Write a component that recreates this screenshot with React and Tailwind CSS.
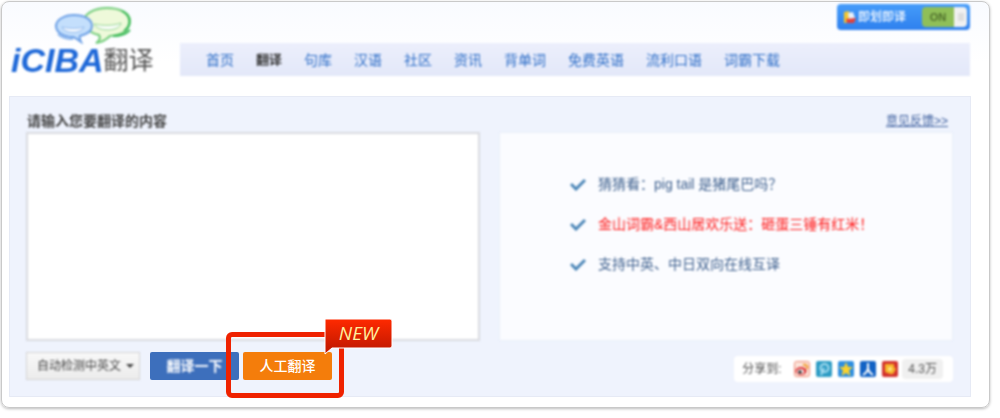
const navItems = [
  { label: '首页' },
  { label: '翻译', active: true },
  { label: '句库' },
  { label: '汉语' },
  { label: '社区' },
  { label: '资讯' },
  { label: '背单词' },
  { label: '免费英语' },
  { label: '流利口语' },
  { label: '词霸下载' },
]

const tips = [
  { text: '猜猜看：pig tail 是猪尾巴吗？' },
  { text: '金山词霸&西山居欢乐送：砸蛋三锤有红米！', hot: true },
  { text: '支持中英、中日双向在线互译' },
]

function Logo() {
  return (
    <a href="#" aria-label="iCIBA 翻译" className="block w-[171px] shrink-0 pl-0.5 pt-1 blur-[1px]">
      <svg viewBox="54 6 78 38" className="ml-[43px] h-[38px] w-[78px]" fill="none">
        <path d="M99 35 C101 38 99 41 96 43 C103 42 107 39 110 36 C122 35 130 30 130 21 C130 13 120 8 107 8 C94 8 84 14 84 21 C84 28 90 33 99 35Z" fill="#eef9da" stroke="#6fcb78" strokeWidth="2" />
        <path d="M122 11 C131 16 132 25 124 31 M113 36 C120 36 126 34 130 30" stroke="#38b955" strokeWidth="2" />
        <path d="M94 24 C102 26 114 26 121 23 C120 32 97 32 94 24Z" fill="#fff" stroke="#8fd48f" />
        <path d="M73 37 C76 38 78 40 81 42 C80 40 79 38 80 36 C88 34 92 30 92 26 C92 19 84 15 74 15 C64 15 56 20 56 26 C56 32 63 37 73 37Z" fill="#c4dffc" stroke="#6b9fe6" strokeWidth="2" />
        <path d="M58 34 C62 38 67 39 73 39" stroke="#8db7ee" strokeWidth="2" />
        <path d="M62 27 C69 29 78 29 84 27 C82 34 64 34 62 27Z" fill="#fff" stroke="#8db7ee" />
      </svg>
      <span className="flex h-8 items-center whitespace-nowrap">
        <span className="text-[34px] font-bold italic leading-8 text-[#1e68d8]">iCIBA</span>
        <span className="text-[25px] leading-8 text-[#555]">翻译</span>
      </span>
    </a>
  )
}

function InstantToggle() {
  return (
    <button
      type="button"
      role="switch"
      aria-checked="true"
      className="flex h-[26px] w-[133px] items-center rounded bg-gradient-to-b from-[#459cfa] to-[#2f80ee] pl-1.5 pr-[3px] blur-[1px]"
    >
      <svg viewBox="0 0 14 14" className="size-3.5">
        <path d="M1 2 L6 1 L8 12 L1 13Z" fill="#f3c62f" />
        <path d="M5 3 L10 2 L12 8 L6 10Z" fill="#e9f1fa" />
        <path d="M3 9 L13 8 L11 13 L4 13Z" fill="#e2413a" />
      </svg>
      <span className="ml-px text-xs font-medium leading-5 text-white">即划即译</span>
      <span className="ml-auto flex h-5 w-[45px] overflow-hidden rounded-sm">
        <span className="w-8 bg-[#8fbf58] text-[11px] font-bold leading-5 text-[#4f6f2c]">ON</span>
        <span className="flex flex-1 items-center justify-center bg-[#f1f1f1]">
          <span className="h-2 w-1.5 bg-[#ddd]" />
        </span>
      </span>
    </button>
  )
}

function Header() {
  return (
    <header className="flex h-[94px]">
      <Logo />
      <div className="mr-px flex-1">
        <div className="flex justify-end pt-0.5">
          <InstantToggle />
        </div>
        <nav className="mt-[13px] flex h-[33px] items-center gap-[22px] bg-gradient-to-b from-[#eceffc] to-[#e3e8f9] pl-[26px] blur-[1px]">
          {navItems.map((item) => (
            <a
              key={item.label}
              href="#"
              className={
                item.active
                  ? 'text-[13px] font-bold leading-5 text-[#333]'
                  : 'text-sm leading-5 text-[#2f6fc8]'
              }
            >
              {item.label}
            </a>
          ))}
        </nav>
      </div>
    </header>
  )
}

function TipList() {
  return (
    <ul className="border border-[#e9effa] bg-[#fbfcff] pl-[70px] pt-[31px] blur-[1px]">
      {tips.map((tip) => (
        <li key={tip.text} className="flex h-10 items-center gap-3">
          <svg viewBox="0 0 16 14" className="h-3.5 w-4" fill="none">
            <path d="M1 7 L6 12 L15 3" stroke="#4d87b8" strokeWidth="3" />
          </svg>
          <span className={tip.hot ? 'text-sm leading-5 text-[#ff1a1a]' : 'text-sm leading-5 text-[#3f618f]'}>
            {tip.text}
          </span>
        </li>
      ))}
    </ul>
  )
}

function ShareBar() {
  return (
    <div className="ml-auto mt-1 flex h-[26px] items-center rounded-sm bg-white px-2 blur-[1px]">
      <span className="w-[52px] text-xs leading-5 text-[#555]">分享到:</span>
      <div className="flex gap-1.5">
        <a href="#" aria-label="新浪微博">
          <svg viewBox="0 0 16 16" className="size-4">
            <rect x=".5" y=".5" width="15" height="15" rx="2" fill="#fbe3d9" stroke="#ee8a76" />
            <ellipse cx="7" cy="10" rx="5.5" ry="4" fill="#dc2f33" />
            <ellipse cx="6.5" cy="10.5" rx="3.5" ry="2.5" fill="#fff" />
            <circle cx="6" cy="11" r="1.8" fill="#222" />
            <path d="M9 4 C12 3 14 5 13 8" fill="none" stroke="#f09a2c" strokeWidth="2" />
          </svg>
        </a>
        <a href="#" aria-label="腾讯微博">
          <svg viewBox="0 0 16 16" className="size-4" fill="none">
            <rect width="16" height="16" rx="2" fill="#2d9cc4" />
            <circle cx="8.5" cy="7" r="4" stroke="#a5dcf0" strokeWidth="2" />
            <path d="M8 7 L5 14" stroke="#a5dcf0" strokeWidth="2" />
          </svg>
        </a>
        <a href="#" aria-label="QQ空间">
          <svg viewBox="0 0 16 16" className="size-4">
            <rect width="16" height="16" rx="2" fill="#2e8fe0" />
            <path d="M8 1 L10 6 L15 6 L11 9.5 L12.5 15 L8 12 L3.5 15 L5 9.5 L1 6 L6 6Z" fill="#fbd22c" />
          </svg>
        </a>
        <a href="#" aria-label="人人网">
          <svg viewBox="0 0 16 16" className="size-4" fill="none">
            <rect width="16" height="16" rx="2" fill="#1262c4" />
            <path d="M8 2 V7 C8 10 6 12 3 14 M8 7 C8 10 10 12 13 14" stroke="#fff" strokeWidth="2" />
          </svg>
        </a>
        <a href="#" aria-label="更多">
          <svg viewBox="0 0 16 16" className="size-4">
            <rect width="16" height="16" rx="2" fill="#d2322d" />
            <path d="M3 3 H12 V6 L14 8 L11 13 H8 L3 11Z" fill="#f7b52c" />
            <circle cx="8" cy="8" r="2" fill="#fde58a" />
          </svg>
        </a>
      </div>
      <span className="ml-1 mr-0.5 rounded bg-[#f0f0f0] px-1.5 text-xs leading-5 text-[#555]">4.3万</span>
    </div>
  )
}

function HumanTranslate() {
  return (
    <div className="relative ml-1">
      <button type="button" className="h-7 w-[89px] rounded-xs bg-[#f47d0b] text-sm font-medium leading-5 text-white">
        人工翻译
      </button>
      <div className="pointer-events-none absolute -bottom-[18px] -left-[17px] -right-3 -top-5 rounded-md border-5 border-[#ef2200]" />
      <div className="absolute -top-[34px] left-[81px] h-[38px] w-[69px]">
        <svg viewBox="0 0 69 38" className="absolute inset-0 h-[38px] w-[69px]">
          <defs>
            <linearGradient id="new-badge" x1="0" y1="0" x2="0" y2="1">
              <stop offset="0" stopColor="#ff2a00" />
              <stop offset=".8" stopColor="#c81a00" />
            </linearGradient>
          </defs>
          <path d="M1 1 H66 Q68 1 68 3 V28 Q68 30 66 30 H8 L1 36Z" fill="url(#new-badge)" stroke="#fff" />
        </svg>
        <span className="relative block text-center font-['Open_Sans',sans-serif] text-[19px] italic leading-[30px] text-[#ffef9e]">
          NEW
        </span>
      </div>
    </div>
  )
}

export default function App() {
  return (
    <div className="bg-white pb-2 pl-px pr-2.5 pt-px font-['Liberation_Sans','Noto_Sans_CJK_SC',sans-serif]">
      <div className="rounded-lg border border-[#c9c9c9] bg-gradient-to-b from-[#f9fbff] to-white to-15% pb-2.5 pl-[7px] pr-[18px] shadow-[0_1px_3px_#bbb]">
        <Header />
        <main className="border border-[#e6eaf5] bg-[#eff3fd] pb-3.5 pl-4 pr-[17px] pt-3.5">
          <div className="flex h-[21px] items-start justify-between">
            <label htmlFor="source" className="ml-px text-sm font-bold leading-5 text-[#444] blur-[1px]">
              请输入您要翻译的内容
            </label>
            <a href="#" className="mr-[5px] text-xs leading-5 text-[#3d5f9e] underline blur-[1px]">
              意见反馈&gt;&gt;
            </a>
          </div>
          <div className="grid grid-cols-2 gap-[19px]">
            <textarea id="source" className="block h-[209px] w-full resize-none border-2 border-[#d9dbe0] bg-white p-2 text-sm outline-none blur-[1px]" />
            <TipList />
          </div>
          <div className="mt-[11px] flex items-start">
            <div className="relative blur-[1px]">
              <select
                aria-label="翻译方向"
                className="h-7 w-[114px] appearance-none border border-[#d4d4d4] bg-gradient-to-b from-[#f8f8f8] to-[#ececec] pl-2.5 text-xs leading-5 text-[#444]"
              >
                <option>自动检测中英文</option>
              </select>
              <svg viewBox="0 0 8 4" className="pointer-events-none absolute right-1.5 top-3 h-1 w-2">
                <path d="M0 0 H8 L4 4Z" fill="#444" />
              </svg>
            </div>
            <button type="button" className="ml-2.5 h-7 w-[89px] rounded-xs bg-[#3d6fbc] text-sm font-bold leading-5 text-white">
              <span className="block blur-[1px]">翻译一下</span>
            </button>
            <HumanTranslate />
            <ShareBar />
          </div>
        </main>
      </div>
    </div>
  )
}
